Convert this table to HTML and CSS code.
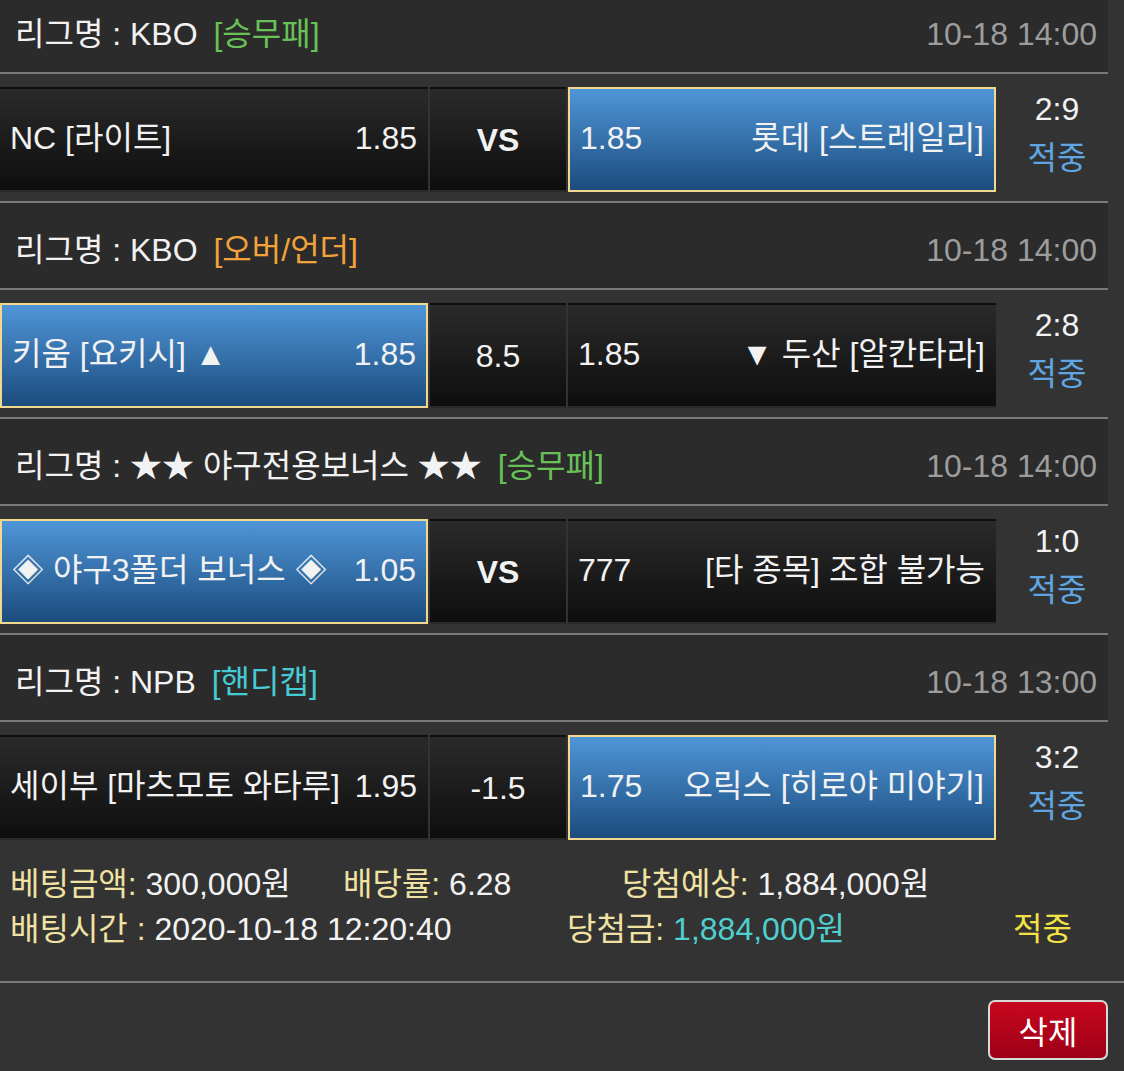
FILE: index.html
```html
<!DOCTYPE html>
<html lang="ko">
<head>
    <meta charset="UTF-8">
    <meta name="viewport" content="width=device-width, initial-scale=1.0">
    <title>배팅내역</title>
    <link rel="stylesheet" href="styles.css">
</head>
<body>
    <div class="slip">
        <!-- game 1 -->
        <div class="game-head">
            <span class="league">리그명 : KBO <span class="tag tag-win">[승무패]</span></span>
            <span class="time">10-18 14:00</span>
        </div>
        <div class="game-row">
            <div class="pick"><span>NC [라이트]</span><span>1.85</span></div>
            <div class="pick mid bold">VS</div>
            <div class="pick selected"><span>1.85</span><span>롯데 [스트레일리]</span></div>
            <div class="result"><div>2:9</div><div class="hit">적중</div></div>
        </div>

        <!-- game 2 -->
        <div class="game-head">
            <span class="league">리그명 : KBO <span class="tag tag-ou">[오버/언더]</span></span>
            <span class="time">10-18 14:00</span>
        </div>
        <div class="game-row">
            <div class="pick selected"><span>키움 [요키시] ▲</span><span>1.85</span></div>
            <div class="pick mid">8.5</div>
            <div class="pick"><span>1.85</span><span>▼ 두산 [알칸타라]</span></div>
            <div class="result"><div>2:8</div><div class="hit">적중</div></div>
        </div>

        <!-- game 3 -->
        <div class="game-head">
            <span class="league">리그명 : ★★ 야구전용보너스 ★★ <span class="tag tag-win">[승무패]</span></span>
            <span class="time">10-18 14:00</span>
        </div>
        <div class="game-row">
            <div class="pick selected"><span>◈ 야구3폴더 보너스 ◈</span><span>1.05</span></div>
            <div class="pick mid bold">VS</div>
            <div class="pick"><span>777</span><span>[타 종목] 조합 불가능</span></div>
            <div class="result"><div>1:0</div><div class="hit">적중</div></div>
        </div>

        <!-- game 4 -->
        <div class="game-head">
            <span class="league">리그명 : NPB <span class="tag tag-hc">[핸디캡]</span></span>
            <span class="time">10-18 13:00</span>
        </div>
        <div class="game-row last">
            <div class="pick"><span>세이부 [마츠모토 와타루]</span><span>1.95</span></div>
            <div class="pick mid">-1.5</div>
            <div class="pick selected"><span>1.75</span><span>오릭스 [히로야 미야기]</span></div>
            <div class="result"><div>3:2</div><div class="hit">적중</div></div>
        </div>

        <div class="summary">
            <div class="summary-line">
                <span class="col-a"><em>베팅금액:</em> 300,000원</span>
                <span class="col-b"><em>배당률:</em> 6.28</span>
                <span><em>당첨예상:</em> 1,884,000원</span>
            </div>
            <div class="summary-line">
                <span class="col-c"><em>배팅시간 :</em> 2020-10-18 12:20:40</span>
                <span class="col-d"><em>당첨금:</em> <span class="won">1,884,000원</span></span>
                <span class="status">적중</span>
            </div>
        </div>

        <div class="actions">
            <button class="btn-delete">삭제</button>
        </div>
    </div>
</body>
</html>
```

FILE: styles.css
```css
* {
    margin: 0;
    padding: 0;
    box-sizing: border-box;
}

body {
    font-family: 'Liberation Sans', 'Noto Sans CJK KR', sans-serif;
    font-size: 32px;
    line-height: 1;
    background-color: #333;
    color: #f2f2f2;
    overflow: hidden;
}

.slip {
    margin-top: -13px;
}

.game-head {
    width: 1108px;
    height: 87px;
    display: flex;
    justify-content: space-between;
    align-items: center;
    padding: 8px 11px 0 15px;
    background-color: #2b2b2b;
    border-bottom: 2px solid #7a7a7a;
}

.tag {
    margin-left: 7px;
}

.tag-win { color: #68c157; }
.tag-ou { color: #f2a23a; }
.tag-hc { color: #45cbd3; }

.time {
    color: #9d9d9d;
}

.game-row {
    width: 1108px;
    display: flex;
    gap: 2px;
    padding: 13px 0 9px;
    border-bottom: 2px solid #7a7a7a;
}

.game-row.last {
    padding-bottom: 0;
    border-bottom: none;
}

.pick {
    width: 428px;
    height: 105px;
    display: flex;
    justify-content: space-between;
    align-items: center;
    padding: 0 9px 4px 8px;
    border: 2px solid transparent;
    background: linear-gradient(#2a2a2a, #0e0e0e);
    white-space: nowrap;
}

.pick.mid {
    width: 136px;
    justify-content: center;
    padding: 0;
}

.pick.bold {
    font-weight: bold;
}

.pick.selected {
    border-color: #f1d88e;
    background: linear-gradient(#4f96d8, #1c4c7e);
    padding: 0 10px 4px;
}

.result {
    flex: 1;
    display: flex;
    flex-direction: column;
    align-items: center;
    line-height: 49px;
    margin-top: -2px;
    padding-left: 8px;
}

.hit {
    color: #5fa6e2;
}

.summary {
    padding: 22px 10px 29px;
    line-height: 45px;
    border-bottom: 2px solid #7a7a7a;
}

.summary-line {
    display: flex;
    white-space: nowrap;
}

.summary em {
    font-style: normal;
    color: #f0e2a2;
}

.col-a { width: 333px; }
.col-b { width: 279px; }
.col-c { width: 557px; }
.col-d { width: 446px; }

.won {
    color: #4fcfcf;
}

.status {
    color: #f3e245;
}

.actions {
    display: flex;
    justify-content: flex-end;
    padding: 17px 16px 0 0;
}

.btn-delete {
    width: 120px;
    height: 60px;
    font-family: inherit;
    font-size: 32px;
    color: #fff;
    background: linear-gradient(#c8071f, #9c0016);
    border: 2px solid #d9d9d9;
    border-radius: 7px;
    cursor: pointer;
}
```
